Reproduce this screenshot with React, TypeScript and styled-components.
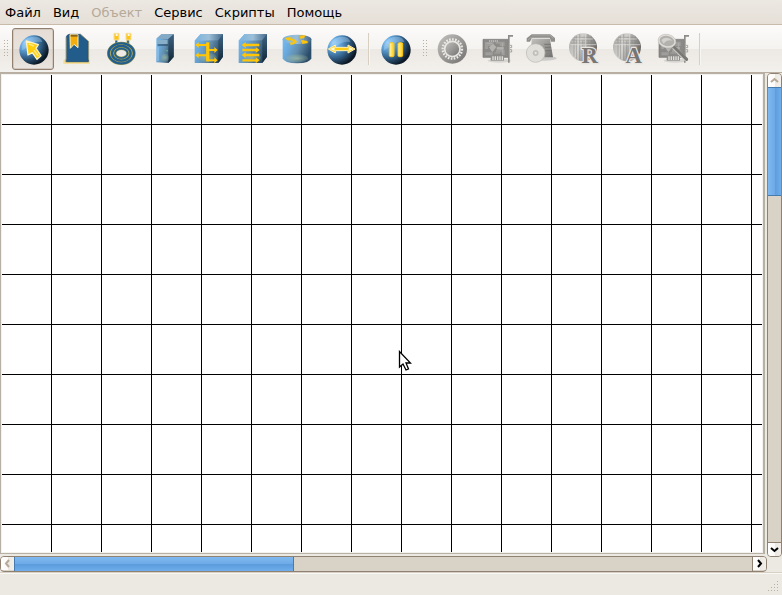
import React from "react";
import styled, { createGlobalStyle, css } from "styled-components";

const GlobalStyle = createGlobalStyle`
  * { box-sizing: border-box; }
  body { margin: 0; background: #ece9e2; color: #000; font: 13px/16px "DejaVu Sans", sans-serif; }
  button { font: inherit; color: inherit; }
`;

const Window = styled.div`
  display: grid;
  grid-template-rows: 25px 48px minmax(0, 1fr) 22px;
  height: 100vh;
  overflow: hidden;
`;

const MenuBar = styled.nav`
  display: flex;
  align-items: flex-start;
  padding-top: 1px;
  background: linear-gradient(#ece8e2, #e5dfd7);
  border-bottom: 1px solid #c9bbaa;
`;

const MenuButton = styled.button`
  height: 23px;
  padding: 0 7px 0 5px;
  border: 0;
  background: none;
  white-space: nowrap;
  &:disabled { color: #b5a999; }
`;

const ToolBar = styled.div`
  display: flex;
  align-items: center;
  gap: 2px;
  padding-left: 1px;
  background: linear-gradient(#fcfbfa 0, #f5f3f0 50%, #ece8e3 51%, #f3f1ed 100%);
  border-bottom: 1px solid #b9aea1;
`;

const dots = css`
  background-image: conic-gradient(from 270deg at 1px 1px, #b9b0a4 90deg, transparent 0);
  background-size: 3px 3px;
`;

const Handle = styled.span`
  ${dots}
  flex: none;
  width: 6px;
  height: 17px;
  margin: 0 2px 0 3px;
`;

const ToolButton = styled.button<{ $active?: boolean }>`
  flex: none;
  width: 42px;
  height: 42px;
  margin-right: 2px;
  padding: 2px;
  border: 1px solid ${(p) => (p.$active ? "#91806f" : "transparent")};
  border-radius: 3px;
  background: ${(p) => (p.$active ? "linear-gradient(#e5ddd5 0, #e9e2dc 50%, #dfd7cf 51%, #eae5e0)" : "none")};
  box-shadow: ${(p) => (p.$active ? "inset 0 0 0 1px #d3c9bf" : "none")};
  svg { display: block; width: 36px; height: 36px; }
`;

const Separator = styled.span`
  flex: none;
  width: 2px;
  height: 32px;
  margin: 0 4px;
  background: #d6cfc2;
  border-right: 1px solid #f8f6f2;
`;

const Group = styled.div`
  display: flex;
  align-items: center;
`;

const Workspace = styled.main`
  display: grid;
  grid-template: minmax(0, 1fr) 16px / minmax(0, 1fr) 15px;
  column-gap: 2px;
  row-gap: 2px;
  border-bottom: 1px solid #d8d0c5;
`;

const CanvasFrame = styled.section`
  position: relative;
  margin: 0;
  padding: 1px;
  border: 1px solid #b6b0a5;
  border-right-width: 2px;
  background: #f4f2ee;
`;

const Grid = styled.div`
  height: 100%;
  background-color: #fff;
  background-image:
    linear-gradient(to right, transparent 49px, #000 49px),
    linear-gradient(transparent 49px, #000 49px);
  background-size: 50px 50px;
`;

const Cursor = styled.svg`
  position: absolute;
  left: 397px;
  top: 276px;
  width: 14px;
  height: 22px;
`;

const Bar = styled.div<{ $vertical?: boolean }>`
  display: flex;
  flex-direction: ${(p) => (p.$vertical ? "column" : "row")};
  ${(p) => (p.$vertical ? "grid-area: 1 / 2 / 3 / 3; margin-bottom: 15px;" : "grid-area: 2 / 1 / 3 / 2; margin-right: -2px;")}
  border: 1px solid #8f8272;
  border-radius: 4px;
  background: #d9d2c6;
  overflow: hidden;
`;

const Arrow = styled.button`
  flex: none;
  display: grid;
  place-items: center;
  width: 13px;
  height: 13px;
  padding: 0;
  border: 0;
  background: linear-gradient(90deg, #fff 0, #fbfaf8 50%, #ece7e0 51%, #f2efeb);
  &:disabled { color: #b5a999; }
  svg { width: 9px; height: 9px; }
`;

const Track = styled.div<{ $vertical?: boolean }>`
  flex: 1;
  display: flex;
  flex-direction: ${(p) => (p.$vertical ? "column" : "row")};
  ${(p) => (p.$vertical ? "border-bottom" : "border-right")}: 1px solid #8f8272;
`;

const Thumb = styled.div<{ $vertical?: boolean }>`
  border: 1px solid #477bae;
  ${(p) =>
    p.$vertical
      ? "flex: 0 0 24%; margin: 0 -1px; background: linear-gradient(90deg, #80b9f0, #6daae7 50%, #5b9bdd 51%, #70aeeb);"
      : "flex: 0 0 38%; margin: -1px 0; background: linear-gradient(#80b9f0, #6daae7 50%, #5b9bdd 51%, #70aeeb);"}
`;

const StatusBar = styled.footer`
  display: flex;
  justify-content: flex-end;
  align-items: flex-end;
  padding: 0 2px 2px;
  border-top: 1px solid #faf8f5;
`;

const Grip = styled.span`
  ${dots}
  width: 12px;
  height: 12px;
  clip-path: polygon(100% 0, 100% 100%, 0 100%, 0 75%, 75% 0);
`;

const Chevron = ({ d }: { d: string }) => (
  <svg viewBox="0 0 9 9" fill="none" stroke="currentColor" strokeWidth="2" aria-hidden="true">
    <path d={d} />
  </svg>
);

const Defs = () => (
  <defs>
    <radialGradient id="ball" cx=".22" cy=".25" r=".9">
      <stop stopColor="#8fcafa" /><stop offset=".3" stopColor="#5b9bd0" />
      <stop offset=".6" stopColor="#2f5b82" /><stop offset=".9" stopColor="#0c1824" />
    </radialGradient>
    <linearGradient id="box" x2="1" y2=".4">
      <stop stopColor="#76bcf4" /><stop offset=".3" stopColor="#6aa9dc" /><stop offset=".6" stopColor="#628dac" /><stop offset="1" stopColor="#2b4c68" />
    </linearGradient>
    <linearGradient id="top" x2="1">
      <stop stopColor="#79b3df" /><stop offset=".5" stopColor="#9dbfd8" /><stop offset="1" stopColor="#44698a" />
    </linearGradient>
    <linearGradient id="side" x2="0" y2="1">
      <stop stopColor="#3d6382" /><stop offset="1" stopColor="#132637" />
    </linearGradient>
    <linearGradient id="metal" x2="1" y2="1">
      <stop stopColor="#c3c2bf" /><stop offset="1" stopColor="#71706e" />
    </linearGradient>
    <linearGradient id="globe" x2="1" y2=".4">
      <stop stopColor="#aaa9a6" /><stop offset=".45" stopColor="#d2d0cc" /><stop offset="1" stopColor="#6f6e6c" />
    </linearGradient>
    <radialGradient id="glow"><stop stopColor="#b7d0a7" stopOpacity=".6" /><stop offset="1" stopColor="#9dbba0" stopOpacity=".2" /></radialGradient>
    <linearGradient id="gold"><stop stopColor="#fff7ba" /><stop offset="1" stopColor="#ffca05" /></linearGradient>
  </defs>
);

const Ball = () => (
  <>
    <circle cx="57" cy="57" r="44" fill="url(#ball)" />
    <path d="M20 58Q19 25 49 18Q77 14 82 33Q59 29 44 43Q30 55 20 58" fill="#b8ddf8" opacity=".35" />
  </>
);

const Cube = () => (
  <>
    <path d="M11 29L28 10H96V77L82 96H11Z" fill="url(#box)" />
    <path d="M11 29L28 10H96L82 28Z" fill="url(#top)" />
    <path d="M82 28L96 10V77L82 96Z" fill="url(#side)" />
    <ellipse cx="51" cy="80" rx="27" ry="14" fill="url(#glow)" />
  </>
);

const Card = () => (
  <>
    <ellipse cx="64" cy="89" rx="35" ry="6" fill="#aaa" opacity=".35" />
    <path d="M15 25H91V79H15Z" fill="#8b8a88" stroke="#777674" strokeWidth="2" />
    <path d="M21 33H47V45H30V54H21ZM53 32H80V45H65V38H53ZM22 64H44V73H22ZM54 57H80V72H71V64H54Z" fill="#9f9e9b" />
    <path d="M34 49L45 40L54 48L43 62ZM57 49H76V55H57ZM49 66H66M27 37H42M74 36V66" fill="#b5b3af" stroke="#b5b3af" strokeWidth="2" />
    <path d="M33 30H60" stroke="#deddd9" strokeWidth="3" strokeDasharray="4 2" />
    <path d="M90 12H105V17H95V95H90Z" fill="#8d8c89" />
    <path d="M96 43H101V50H96M96 56H101V63H96" fill="none" stroke="#a4a29f" strokeWidth="3" />
    <path d="M38 76H78V89H38Z" fill="#92918e" />
    <path d="M45 76V87M52 76V87M59 76V87M66 76V87M73 76V87" stroke="#dfddda" strokeWidth="4" />
  </>
);

const Globe = ({ letter }: { letter: string }) => (
  <>
    <circle cx="51" cy="49" r="42" fill="url(#globe)" />
    <path d="M24 22V77M32 15V83M41 10V88M50 28V90M14 36H91M18 27H84M24 19H78M66 10V48M76 16V58" stroke="#858481" strokeWidth="3" opacity=".5" />
    <path d="M59 9V88M28 24H80M14 41H91M36 12V86" stroke="#e4e2df" strokeWidth="3" opacity=".65" />
    <text x="71" y="95" textAnchor="middle" fontFamily="Liberation Serif" fontWeight="700" fontSize="68" fill="#777674" stroke="#e8e5e1" strokeWidth="7" paintOrder="stroke">{letter}</text>
  </>
);

const icons: Record<string, React.ReactNode> = {
  select: (
    <>
      <Ball />
      <path d="M34 30L70 41L63 52L78 74L66 85L52 65L39 72Z" fill="#ffcd0c" stroke="#fff4bf" strokeWidth="4" strokeLinejoin="round" />
      <path d="M41 38L57 46M57 58L70 76" fill="none" stroke="#ffe884" strokeWidth="5" />
    </>
  ),
  book: (
    <>
      <path d="M13 87H93V99H13Z" fill="#f4dea0" /><path d="M19 84V93H89V84" fill="none" stroke="#d6ba5d" strokeWidth="3" />
      <path d="M22 17Q24 11 31 10H64L88 31V92H22Z" fill="#225c8b" stroke="#16466e" strokeWidth="2" />
      <path d="M21 19V86" stroke="#c2b066" strokeWidth="2" /><path d="M64 9L89 31V86" fill="none" stroke="#b3a976" strokeWidth="2" />
      <path d="M33 11H57V50L45 40L34 52Z" fill="#f4ae0c" stroke="#fff0b1" strokeWidth="3" /><path d="M35 11H56V17H35Z" fill="#8b6320" />
    </>
  ),
  cable: (
    <g fill="none">
      <path d="M40 27V41L28 48M75 27V41L84 48" stroke="#96964c" strokeWidth="8" />
      <path d="M40 27V41L28 48M75 27V41L84 48" stroke="#225f8f" strokeWidth="4" />
      <ellipse cx="55" cy="67" rx="38" ry="30" stroke="#96964c" strokeWidth="10" /><ellipse cx="55" cy="67" rx="38" ry="30" stroke="#225f8f" strokeWidth="7" />
      <ellipse cx="55" cy="67" rx="28" ry="22" stroke="#96964c" strokeWidth="10" /><ellipse cx="55" cy="67" rx="28" ry="22" stroke="#225f8f" strokeWidth="7" />
      <ellipse cx="55" cy="67" rx="19" ry="14" stroke="#96964c" strokeWidth="8" /><ellipse cx="55" cy="67" rx="19" ry="14" stroke="#225f8f" strokeWidth="5" />
      <path d="M33 7H48V27H33ZM69 7H84V27H69Z" fill="#ffc516" stroke="#f3de9a" strokeWidth="3" />
      <path d="M38 8H44V15H38ZM74 8H80V15H74Z" fill="#fff8e4" />
    </g>
  ),
  tower: (
    <>
      <path d="M28 23L43 10H80V78L64 96L28 94Z" fill="url(#box)" />
      <path d="M28 23L43 10H80L64 24Z" fill="#84a9c4" /><path d="M64 24L80 10V78L64 96Z" fill="url(#side)" />
      <path d="M32 27H61V39H32Z" fill="#87afca" /><path d="M32 42H63" stroke="#1e3c55" strokeWidth="3" />
      <path d="M33 49V90" stroke="#8fc7ef" strokeWidth="5" opacity=".7" /><ellipse cx="54" cy="80" rx="12" ry="12" fill="url(#glow)" /><circle cx="60" cy="59" r="2" fill="#69dd95" />
    </>
  ),
  hub: (
    <>
      <Cube />
      <path d="M49 35V88H74M49 57H74M19 42H49M19 73H49" fill="none" stroke="#ffc506" strokeWidth="6" />
      <path d="M13 42L23 33V51ZM13 73L23 64V82ZM80 57L70 48V66ZM80 88L70 79V97Z" fill="#ffc506" />
      <path d="M46 34H55V91H46Z" fill="#ffc506" />
    </>
  ),
  switch: (
    <>
      <Cube />
      <path d="M28 42H73M22 57H65M28 72H73M22 88H65" stroke="#ffc506" strokeWidth="7" />
      <path d="M20 42L32 33V51ZM74 57L62 48V66ZM20 72L32 63V81ZM74 88L62 79V97Z" fill="#ffc506" />
    </>
  ),
  router: (
    <>
      <path d="M11 25V82Q15 97 54 97T97 82V25Z" fill="url(#box)" /><ellipse cx="54" cy="25" rx="43" ry="14" fill="url(#top)" />
      <ellipse cx="54" cy="82" rx="34" ry="12" fill="url(#glow)" />
      <path d="M23 23L43 26M64 22L76 15M67 30L85 33M40 39L51 31" stroke="#ffc506" strokeWidth="6" />
      <path d="M16 21L36 18L29 29ZM49 24L54 34L37 31ZM59 14L78 13L75 23ZM89 36L69 39L71 28ZM35 43L33 34L49 37Z" fill="#ffc506" />
    </>
  ),
  link: (
    <>
      <Ball />
      <path d="M16 54L37 42V49H75V42L96 54L75 66V59H37V66Z" fill="#ffcc16" stroke="#fff1b5" strokeWidth="3" />
      <path d="M20 54L35 47V61ZM92 54L77 47V61Z" fill="#fff7d4" />
    </>
  ),
  pause: (
    <>
      <Ball />
      <rect x="37" y="35" width="14" height="42" rx="4" fill="url(#gold)" stroke="#ffc711" strokeWidth="3" /><rect x="63" y="35" width="14" height="42" rx="4" fill="url(#gold)" stroke="#ffc711" strokeWidth="3" />
    </>
  ),
  gear: (
    <>
      <circle cx="55" cy="54" r="44" fill="url(#metal)" />
      <circle cx="55" cy="54" r="29" fill="none" stroke="#eceae7" strokeWidth="7" strokeDasharray="5 4" />
      <circle cx="55" cy="54" r="23" fill="url(#metal)" stroke="#e8e6e2" strokeWidth="5" />
    </>
  ),
  card: <Card />,
  modem: (
    <>
      <ellipse cx="66" cy="82" rx="38" ry="7" fill="#aaa" opacity=".5" /><path d="M29 24H84L93 79H26Z" fill="url(#metal)" />
      <path d="M29 10H85L99 21V32H87L84 22H29L24 32H14V22Z" fill="#8f8e8b" /><path d="M30 12H84L94 23M18 27L28 19H83" fill="none" stroke="#aaa8a5" strokeWidth="3" />
      <circle cx="41" cy="66" r="28" fill="#e1dfda" stroke="#b8b6b1" strokeWidth="2" /><circle cx="41" cy="66" r="8" fill="#c8c6c1" stroke="#a6a4a0" /><circle cx="41" cy="66" r="3" fill="#ebe8e4" />
      <path d="M67 40H86M69 49H87M70 59H88" stroke="#777673" strokeWidth="3" />
    </>
  ),
  r: <Globe letter="R" />,
  a: <Globe letter="A" />,
  inspect: (
    <>
      <Card />
      <path d="M59 49L98 87" stroke="#d0cec9" strokeWidth="12" /><path d="M60 48L98 85" stroke="#797875" strokeWidth="9" strokeLinecap="round" />
      <ellipse cx="39" cy="30" rx="25" ry="18" transform="rotate(12 39 30)" fill="#b3b1ad" stroke="#e2dfda" strokeWidth="5" />
      <ellipse cx="39" cy="30" rx="27" ry="20" transform="rotate(12 39 30)" fill="none" stroke="#aaa8a4" strokeWidth="1" /><path d="M22 27Q38 13 56 29Q39 24 29 38Z" fill="#d4d2ce" />
    </>
  ),
};

const menus = ["Файл", "Вид", "Объект", "Сервис", "Скрипты", "Помощь"];
const mainTools = [["select", "Выбор"], ["book", "Заметка"], ["cable", "Кабель"], ["tower", "Компьютер"], ["hub", "Концентратор"], ["switch", "Коммутатор"], ["router", "Маршрутизатор"], ["link", "Соединение"]];
const objectTools = [["gear", "Свойства"], ["card", "Интерфейсы"], ["modem", "Программы"], ["r", "Таблица маршрутизации"], ["a", "Таблица ARP"], ["inspect", "Журнал"]];

const Tool = ({ name, label, active, disabled }: { name: string; label: string; active?: boolean; disabled?: boolean }) => (
  <ToolButton type="button" aria-label={label} aria-pressed={active} disabled={disabled} $active={active}>
    <svg viewBox="0 0 108 108" aria-hidden="true"><Defs />{icons[name]}</svg>
  </ToolButton>
);

export default function App() {
  return (
    <>
      <GlobalStyle />
      <Window>
        <MenuBar>
          {menus.map((name) => <MenuButton key={name} type="button" disabled={name === "Объект"}>{name}</MenuButton>)}
        </MenuBar>
        <ToolBar role="toolbar">
          <Group>
            <Handle />
            {mainTools.map(([name, label], i) => <Tool key={name} name={name} label={label} active={i === 0} />)}
            <Separator />
            <Tool name="pause" label="Пауза" />
          </Group>
          <Group>
            <Handle />
            {objectTools.map(([name, label]) => <Tool key={name} name={name} label={label} disabled />)}
            <Separator />
          </Group>
        </ToolBar>
        <Workspace>
          <CanvasFrame>
            <Grid />
            <Cursor viewBox="0 0 14 22" aria-hidden="true"><path d="M1.5 1.5V17L5 14L8 20L10.500 19L8 13H12.500Z" fill="#fff" stroke="#000" strokeWidth="1.3" /></Cursor>
          </CanvasFrame>
          <Bar $vertical>
            <Arrow type="button" aria-label="Вверх" disabled><Chevron d="M1 6L4.500 3L8 6" /></Arrow>
            <Track $vertical><Thumb $vertical /></Track>
            <Arrow type="button" aria-label="Вниз"><Chevron d="M1 3L4.500 6L8 3" /></Arrow>
          </Bar>
          <Bar>
            <Arrow type="button" aria-label="Влево" disabled><Chevron d="M6 1L3 4.500L6 8" /></Arrow>
            <Track><Thumb /></Track>
            <Arrow type="button" aria-label="Вправо"><Chevron d="M3 1L6 4.500L3 8" /></Arrow>
          </Bar>
        </Workspace>
        <StatusBar><Grip /></StatusBar>
      </Window>
    </>
  );
}
